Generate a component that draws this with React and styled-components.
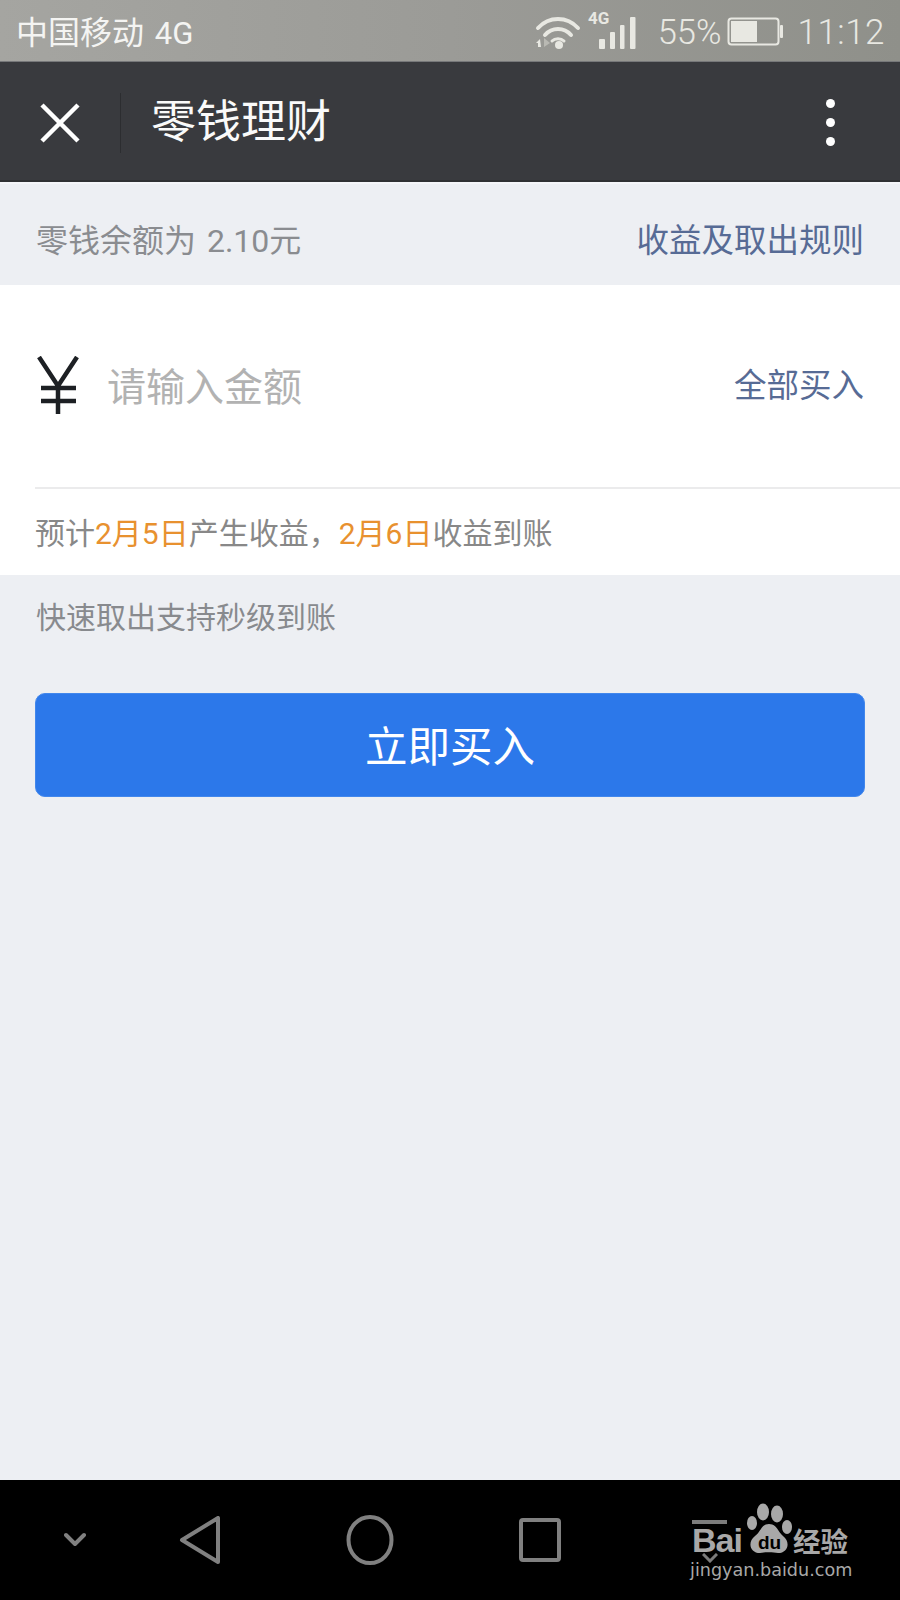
import React from "react";
import styled, { createGlobalStyle } from "styled-components";

const GlobalStyle = createGlobalStyle`
  html, body {
    margin: 0;
    padding: 0;
    background: #edeff3;
    font-family: "Roboto", "Noto Sans CJK SC", sans-serif;
  }
`;

const Page = styled.div`
  position: relative;
  width: 900px;
  height: 1600px;
  display: flex;
  flex-direction: column;
  overflow: hidden;
`;

const StatusBar = styled.div`
  height: 62px;
  box-sizing: border-box;
  padding: 3px 15px 0 16px;
  display: flex;
  align-items: center;
  background: linear-gradient(90deg, #a5a5a1 0%, #9b9b97 50%, #8f908a 100%);
  border-bottom: 1px solid #77787a;
  color: #f2f2ee;
`;

const Carrier = styled.div`
  font-size: 32px;
  line-height: 56px;
  padding-top: 3px;
  flex: 1;
  white-space: nowrap;
  color: #f4f4f2;
`;

const Net = styled.span`
  font-size: 31px;
  margin-left: 3px;
`;

const StatusRight = styled.div`
  display: flex;
  align-items: center;
  color: #e8e8e2;
`;

const WifiIcon = styled.svg`
  margin-right: 3px;
`;

const StatusText = styled.span`
  font-weight: 300;
  font-size: ${(p) => p.$size}px;
  letter-spacing: ${(p) => p.$spacing || 0}px;
  margin-left: ${(p) => p.$left || 0}px;
`;

const BatteryIcon = styled.svg`
  margin-left: 6px;
`;

const NavBar = styled.div`
  height: 120px;
  box-sizing: border-box;
  padding: 3px 0 0 40px;
  display: flex;
  align-items: center;
  background: #393a3e;
  border-bottom: 2px solid #2f3033;
`;

const Divider = styled.div`
  width: 1px;
  height: 60px;
  margin: 0 30px 0 40px;
  background: #2c2d30;
`;

const Title = styled.div`
  flex: 1;
  font-size: 45px;
  line-height: 60px;
  color: #fafafa;
`;

const Dots = styled.div`
  width: 10px;
  margin-right: 64px;
  display: flex;
  flex-direction: column;
  gap: 10px;
`;

const Dot = styled.span`
  width: 9px;
  height: 9px;
  border-radius: 50%;
  background: #fff;
`;

const Main = styled.div`
  flex: 1;
  background: #edeff3;
  border-top: 2px solid #f4f5f8;
`;

const BalanceRow = styled.div`
  height: 101px;
  box-sizing: border-box;
  padding: 12px 36px 0;
  display: flex;
  align-items: center;
  justify-content: space-between;
`;

const Muted = styled.span`
  font-size: 32px;
  line-height: 48px;
  word-spacing: 3px;
  color: #8a8c90;
`;

const Link = styled.span`
  font-size: ${(p) => p.$size || 32}px;
  line-height: 48px;
  color: #576b95;
`;

const Card = styled.div`
  height: 290px;
  box-sizing: border-box;
  padding-left: 35px;
  background: #fff;
`;

const AmountRow = styled.div`
  height: 204px;
  box-sizing: border-box;
  padding-right: 36px;
  display: flex;
  align-items: center;
  border-bottom: 2px solid #ebebec;
`;

const Placeholder = styled.span`
  flex: 1;
  margin-left: 26px;
  padding-top: 3px;
  font-size: 39px;
  line-height: 56px;
  color: #b2b2b2;
`;

const Hint = styled.div`
  height: 84px;
  box-sizing: border-box;
  padding-top: 6px;
  display: flex;
  align-items: center;
  font-size: 30px;
  line-height: 44px;
  color: #888;
  white-space: pre;
`;

const Accent = styled.span`
  color: #e8912f;
`;

const Note = styled.div`
  padding: 18px 36px 0;
  height: 101px;
  box-sizing: border-box;
  font-size: 30px;
  line-height: 50px;
  color: #888a8e;
`;

const BuyButton = styled.div`
  height: 104px;
  box-sizing: border-box;
  padding-bottom: 3px;
  margin: 17px 35px 0;
  display: flex;
  align-items: center;
  justify-content: center;
  border: 1px solid #4287ec;
  border-radius: 10px;
  background: #2c78ea;
  color: #fff;
  font-size: 42.5px;
`;

const BottomBar = styled.div`
  height: 120px;
  display: grid;
  grid-template-columns: 150px 100px 240px 100px;
  align-items: center;
  justify-items: center;
  background: #000;
`;

const Watermark = styled.div`
  position: absolute;
  left: 690px;
  top: 1503px;
  width: 170px;
  height: 80px;
  color: #a8a8a8;
`;

const LogoLine = styled.div`
  display: flex;
  align-items: flex-end;
  height: 50px;
  margin-bottom: 4px;
  white-space: nowrap;
`;

const LogoWord = styled.span`
  width: 55px;
  margin-left: 2px;
  font-family: "Liberation Sans", sans-serif;
  font-weight: 700;
  font-size: 34px;
  line-height: 25px;
  letter-spacing: -1px;
`;

const BarMark = styled.div`
  position: absolute;
  left: 2px;
  top: 17px;
  width: 35px;
  height: 4px;
  background: #7c7c7c;
`;

const TickMark = styled.svg`
  position: absolute;
  left: 12px;
  top: 50px;
`;

const PawWrap = styled.div`
  position: relative;
  width: 48px;
  height: 50px;
  margin-right: -2px;
`;

const PawWord = styled.span`
  position: absolute;
  left: 11px;
  bottom: 1px;
  font-family: "Liberation Sans", sans-serif;
  font-weight: 700;
  font-size: 19px;
  line-height: 18px;
  color: #000;
`;

const LogoCn = styled.span`
  font-family: "Noto Sans CJK SC", sans-serif;
  font-size: 27.5px;
  font-weight: 700;
  line-height: 25px;
`;

const LogoUrl = styled.div`
  font-family: "DejaVu Sans", sans-serif;
  font-size: 17.6px;
  line-height: 26px;
  white-space: nowrap;
`;

const Close = () => (
  <svg width="40" height="40" viewBox="0 0 40 40">
    <path d="M2 2 L38 38 M38 2 L2 38" stroke="#fff" strokeWidth="4.5" fill="none" />
  </svg>
);

const Wifi = () => (
  <WifiIcon width="46" height="36" viewBox="0 0 46 36">
    <g fill="none" stroke="#e8e8e2" strokeLinecap="round">
      <path d="M3 14 C14 2 32 2 43 14" strokeWidth="4" />
      <path d="M10 21 C17 13 29 13 36 21" strokeWidth="4" />
      <path d="M17 27 C20 24 26 24 29 27" strokeWidth="3" />
    </g>
    <circle cx="24" cy="31" r="4" fill="#e8e8e2" />
    <path d="M5 25 L1 29 L3 29 L3 33 L6 33 Z" fill="#e8e8e2" />
    <path d="M9 24 L15 29 L9 33 Z" fill="#b9b9b3" />
  </WifiIcon>
);

const Signal = () => (
  <svg width="52" height="56" viewBox="0 -10 52 56">
    <rect x="15" y="25" width="6" height="10" rx="1" fill="#e8e8e2" />
    <rect x="26" y="18" width="5" height="17" rx="1" fill="#e8e8e2" />
    <rect x="36" y="11" width="4.5" height="24" rx="1" fill="#e8e8e2" />
    <rect x="46" y="3" width="5.5" height="32" rx="1" fill="#e8e8e2" />
    <text x="4" y="10" fontFamily="Roboto, sans-serif" fontWeight="700" fontSize="17" fill="#e8e8e2">4G</text>
  </svg>
);

const Battery = () => (
  <BatteryIcon width="57" height="30" viewBox="0 0 57 30">
    <rect x="1.5" y="1.5" width="50" height="26" rx="3" fill="none" stroke="#e8e8e2" strokeWidth="2" />
    <rect x="4" y="4" width="26" height="21" fill="#e8e8e2" />
    <rect x="53" y="8" width="3" height="13" rx="1" fill="#e8e8e2" />
  </BatteryIcon>
);

const Yen = () => (
  <svg width="46" height="60" viewBox="0 0 46 60">
    <path
      d="M4 1 L23 30 L42 1 M23 30 L23 58 M6 32 L41 32 M6 45 L41 45"
      stroke="#1d2024"
      strokeWidth="4.5"
      fill="none"
    />
  </svg>
);

const Chevron = () => (
  <svg width="22" height="16" viewBox="0 0 22 16">
    <path d="M2 3 L11 12 L20 3" stroke="#808080" strokeWidth="4" strokeLinecap="round" strokeLinejoin="round" fill="none" />
  </svg>
);

const Back = () => (
  <svg width="42" height="48" viewBox="0 0 42 48">
    <path d="M3 24 L39 2 L39 46 Z" stroke="#808080" strokeWidth="4" strokeLinejoin="round" fill="none" />
  </svg>
);

const Home = () => (
  <svg width="48" height="50" viewBox="0 0 48 50">
    <ellipse cx="24" cy="25" rx="21.5" ry="23" stroke="#808080" strokeWidth="4" fill="none" />
  </svg>
);

const Recent = () => (
  <svg width="42" height="44" viewBox="0 0 42 44">
    <rect x="2" y="2" width="38" height="40" rx="2" stroke="#808080" strokeWidth="4" fill="none" />
  </svg>
);

const Paw = () => (
  <svg width="48" height="50" viewBox="0 0 48 50" style={{ display: "block" }}>
    <g fill="#a8a8a8">
      <ellipse cx="16" cy="9" rx="6" ry="8.5" />
      <ellipse cx="30" cy="11" rx="6" ry="8.5" />
      <ellipse cx="5" cy="20" rx="5" ry="7" />
      <ellipse cx="40" cy="24" rx="5" ry="7" />
      <path d="M22 21 C30 21 31 29 36 33 C44 39 41 50 31 50 C26 49 18 49 13 50 C3 50 0 39 8 33 C14 29 14 21 22 21 Z" />
    </g>
  </svg>
);

export default function App() {
  return (
    <Page>
      <GlobalStyle />
      <StatusBar>
        <Carrier>
          中国移动<Net> 4G</Net>
        </Carrier>
        <StatusRight>
          <Wifi />
          <Signal />
          <StatusText $size={34.5} $left={22}>55%</StatusText>
          <Battery />
          <StatusText $size={35} $left={13} $spacing={0.5}>11:12</StatusText>
        </StatusRight>
      </StatusBar>
      <NavBar>
        <Close />
        <Divider />
        <Title>零钱理财</Title>
        <Dots>
          <Dot />
          <Dot />
          <Dot />
        </Dots>
      </NavBar>
      <Main>
        <BalanceRow>
          <Muted>零钱余额为 2.10元</Muted>
          <Link $size={32.5}>收益及取出规则</Link>
        </BalanceRow>
        <Card>
          <AmountRow>
            <Yen />
            <Placeholder>请输入金额</Placeholder>
            <Link $size={32.5}>全部买入</Link>
          </AmountRow>
          <Hint>
            预计<Accent>2月5日</Accent>产生收益，<Accent>2月6日</Accent>收益到账
          </Hint>
        </Card>
        <Note>快速取出支持秒级到账</Note>
        <BuyButton>立即买入</BuyButton>
      </Main>
      <BottomBar>
        <Chevron />
        <Back />
        <Home />
        <Recent />
      </BottomBar>
      <Watermark>
        <BarMark />
        <TickMark width="16" height="10" viewBox="0 0 16 10">
          <path d="M1 1 L8 8 L15 1" stroke="#7c7c7c" strokeWidth="3" fill="none" />
        </TickMark>
        <LogoLine>
          <LogoWord>Bai</LogoWord>
          <PawWrap>
            <Paw />
            <PawWord>du</PawWord>
          </PawWrap>
          <LogoCn>经验</LogoCn>
        </LogoLine>
        <LogoUrl>jingyan.baidu.com</LogoUrl>
      </Watermark>
    </Page>
  );
}
